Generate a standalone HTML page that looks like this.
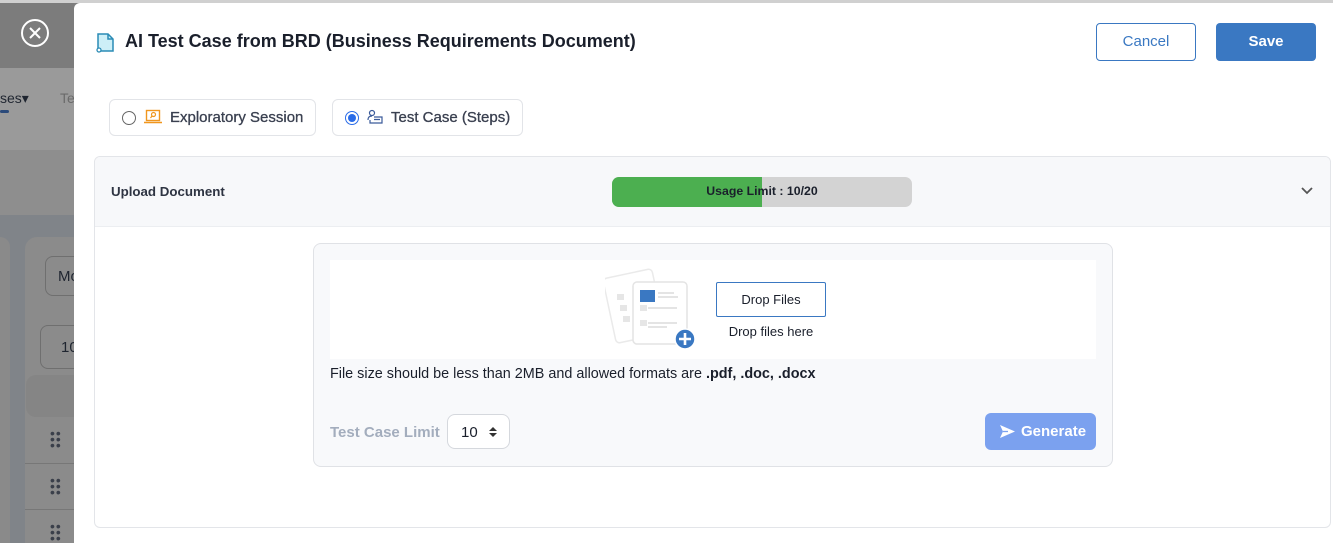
<!DOCTYPE html>
<html><head><style>
*{box-sizing:border-box;margin:0;padding:0}
html,body{width:1333px;height:543px;overflow:hidden}
body{font-family:"Liberation Sans",Arial,sans-serif;background:#7f7f7f;position:relative}
.abs{position:absolute}
</style></head><body>
<div class="abs" style="left:0;top:0;width:1333px;height:3px;background:#d0d0d0"></div>
<div class="abs" style="left:0;top:3px;width:74px;height:65px;background:#7c7c7c"></div>
<div class="abs" style="left:0;top:68px;width:74px;height:82px;background:#9a9a9a"></div>
<div class="abs" style="left:0;top:90px;font-size:14px;color:#1f2530">ses&#9662;</div>
<div class="abs" style="left:60px;top:90px;font-size:14px;color:#6a6a6a">Te</div>
<div class="abs" style="left:0;top:110px;width:9px;height:3px;background:#2b4a7a;border-radius:2px"></div>
<div class="abs" style="left:0;top:150px;width:74px;height:65px;background:#8e8e8e"></div>
<div class="abs" style="left:0;top:215px;width:74px;height:328px;background:#808489"></div>
<div class="abs" style="left:-10px;top:237px;width:20px;height:320px;background:#8a8a8a;border-radius:10px"></div>
<div class="abs" style="left:25px;top:237px;width:60px;height:320px;background:#8b8b8b;border-radius:12px"></div>
<div class="abs" style="left:45px;top:256px;width:50px;height:40px;border:1px solid #6f6f6f;border-radius:8px;font-size:15px;color:#1f2530;padding:11px 0 0 12px">Mo</div>
<div class="abs" style="left:40px;top:325px;width:50px;height:44px;border:1px solid #6f6f6f;border-radius:8px;font-size:15px;color:#1f2530;padding:13px 0 0 20px">10</div>
<div class="abs" style="left:26px;top:375px;width:60px;height:42px;background:#858585;border-radius:10px"></div>
<div class="abs" style="left:25px;top:463px;width:50px;height:1px;background:#777"></div>
<div class="abs" style="left:25px;top:509px;width:50px;height:1px;background:#777"></div>
<div class="abs" style="left:50px;top:430px;color:#3a3f4a;font-size:14px;line-height:6px;letter-spacing:1px">••<br>••<br>••</div>
<div class="abs" style="left:50px;top:477px;color:#3a3f4a;font-size:14px;line-height:6px;letter-spacing:1px">••<br>••<br>••</div>
<div class="abs" style="left:50px;top:523px;color:#3a3f4a;font-size:14px;line-height:6px;letter-spacing:1px">••<br>••<br>••</div>
<svg class="abs" style="left:20px;top:18px" width="30" height="30"><circle cx="15" cy="15" r="13" fill="none" stroke="#fff" stroke-width="2"/><path d="M10 10L20 20M20 10L10 20" stroke="#fff" stroke-width="2"/></svg>

<div class="abs" style="left:74px;top:3px;width:1259px;height:540px;background:#fff;border-radius:6px 0 0 0"></div>
<svg class="abs" style="left:95px;top:32px" width="22" height="22" viewBox="0 0 22 22"><path d="M3 2H13L18 7V19H6L3 16Z" fill="#cdeff7" stroke="#2a8bb5" stroke-width="1.5"/><path d="M13 2V7H18" fill="none" stroke="#2a8bb5" stroke-width="1.5"/><circle cx="4" cy="18" r="2" fill="#fff" stroke="#2a8bb5" stroke-width="1.3"/></svg>
<div class="abs" style="left:125px;top:31px;font-size:18px;font-weight:bold;color:#1a1f2b">AI Test Case from BRD (Business Requirements Document)</div>
<div class="abs" style="left:1096px;top:23px;width:100px;height:38px;border:1px solid #3a78c2;border-radius:4px;color:#3a78c2;font-size:15px;text-align:center;line-height:36px">Cancel</div>
<div class="abs" style="left:1216px;top:23px;width:100px;height:38px;background:#3a78c2;border-radius:4px;color:#fff;font-size:15px;font-weight:bold;text-align:center;line-height:38px">Save</div>

<div class="abs" style="left:109px;top:99px;width:207px;height:37px;border:1px solid #e2e4e8;border-radius:6px"></div>
<div class="abs" style="left:122px;top:111px;width:14px;height:14px;border:1px solid #666;border-radius:50%"></div>
<svg class="abs" style="left:144px;top:109px" width="18" height="16"><rect x="2.5" y="1.5" width="13" height="10" fill="none" stroke="#f0961e" stroke-width="1.4"/><path d="M0 13.5H18" stroke="#f0961e" stroke-width="1.6"/><circle cx="9.5" cy="5.5" r="2" fill="none" stroke="#f0961e" stroke-width="1.2"/><path d="M8 7L6.5 9" stroke="#f0961e" stroke-width="1.2"/></svg>
<div class="abs" style="left:170px;top:109px;font-size:15px;color:#3a4050;-webkit-text-stroke:0.3px #3a4050">Exploratory Session</div>

<div class="abs" style="left:332px;top:99px;width:191px;height:37px;border:1px solid #e2e4e8;border-radius:6px"></div>
<div class="abs" style="left:345px;top:111px;width:14px;height:14px;border:1px solid #2a6ce8;border-radius:50%"></div>
<div class="abs" style="left:348px;top:114px;width:8px;height:8px;background:#2a6ce8;border-radius:50%"></div>
<svg class="abs" style="left:367px;top:109px" width="16" height="16"><circle cx="5" cy="4" r="2.5" fill="none" stroke="#3a5a9a" stroke-width="1.2"/><path d="M1 11Q1 7 5 7M7 8H15V14H3V11M7 10.5H13" fill="none" stroke="#3a5a9a" stroke-width="1.2"/></svg>
<div class="abs" style="left:391px;top:109px;font-size:15px;color:#3a4050;-webkit-text-stroke:0.3px #3a4050">Test Case (Steps)</div>

<div class="abs" style="left:94px;top:156px;width:1237px;height:372px;border:1px solid #e3e5e9;border-radius:6px;background:#fff;overflow:hidden">
 <div style="height:70px;background:#f7f8fa;border-bottom:1px solid #eceef1"></div>
</div>
<div class="abs" style="left:111px;top:184px;font-size:13.3px;font-weight:bold;color:#2e3442">Upload Document</div>
<div class="abs" style="left:612px;top:177px;width:300px;height:30px;background:#d3d3d3;border-radius:7px;overflow:hidden"><div style="width:150px;height:30px;background:#4caf50"></div></div>
<div class="abs" style="left:612px;top:184px;width:300px;text-align:center;font-size:12.3px;font-weight:bold;color:#1a1f2b">Usage Limit : 10/20</div>
<svg class="abs" style="left:1300px;top:186px" width="14" height="10"><path d="M2 2L7 7L12 2" fill="none" stroke="#555" stroke-width="1.8"/></svg>

<div class="abs" style="left:313px;top:243px;width:800px;height:224px;background:#f8f9fb;border:1px solid #e0e2e6;border-radius:8px"></div>
<div class="abs" style="left:330px;top:260px;width:766px;height:99px;background:#fff"></div>
<svg class="abs" style="left:605px;top:268px" width="92" height="84" viewBox="0 0 92 84">
<rect x="4" y="5" width="50" height="66" rx="4" transform="rotate(-12 29 38)" fill="#fff" stroke="#eaeaea" stroke-width="1.5"/>
<rect x="12" y="26" width="7" height="6" fill="#e6e6e6"/><rect x="15" y="37" width="7" height="6" fill="#e6e6e6"/><rect x="18" y="48" width="7" height="6" fill="#e6e6e6"/>
<rect x="28" y="14" width="54" height="62" rx="4" fill="#fff" stroke="#e4e4e4" stroke-width="1.5"/>
<rect x="35" y="22" width="15" height="12" fill="#3a78c2"/>
<path d="M53 25H69M53 29H73M43 40H72M43 55H72M43 59H62" stroke="#dcdcdc" stroke-width="1.5"/>
<rect x="35" y="37" width="7" height="6" fill="#e6e6e6"/><rect x="35" y="52" width="7" height="6" fill="#e6e6e6"/>
<circle cx="80" cy="71" r="10" fill="#3a78c2" stroke="#fff" stroke-width="1.5"/>
<path d="M80 65V77M74 71H86" stroke="#fff" stroke-width="2.6"/>
</svg>
<div class="abs" style="left:716px;top:282px;width:110px;height:35px;border:1px solid #3a78c2;border-radius:2px;text-align:center;line-height:33px;font-size:13px;color:#1a1f2b">Drop Files</div>
<div class="abs" style="left:716px;top:324px;width:110px;text-align:center;font-size:13px;color:#1a1f2b">Drop files here</div>
<div class="abs" style="left:330px;top:366px;font-size:14.4px;color:#1a1f2b">File size should be less than 2MB and allowed formats are <b>.pdf, .doc, .docx</b></div>
<div class="abs" style="left:330px;top:424px;font-size:15px;font-weight:bold;color:#a3adbd">Test Case Limit</div>
<div class="abs" style="left:447px;top:414px;width:63px;height:35px;background:#fff;border:1px solid #d5d8dd;border-radius:8px;font-size:15px;color:#1a1f2b;padding:9px 0 0 13px">10</div>
<svg class="abs" style="left:488px;top:426px" width="10" height="12"><path d="M1 5L5 1L9 5ZM1 7L5 11L9 7Z" fill="#333"/></svg>
<div class="abs" style="left:985px;top:413px;width:111px;height:37px;background:#7ba1ef;border-radius:6px"></div>
<svg class="abs" style="left:999px;top:424px" width="17" height="15"><path d="M1 1L16 7.5L1 14L4 7.5Z" fill="#fff"/><path d="M4 7.5H9" stroke="#7ba1ef" stroke-width="1.3"/></svg>
<div class="abs" style="left:1021px;top:423px;font-size:15px;font-weight:bold;color:#fff">Generate</div>
</body></html>
